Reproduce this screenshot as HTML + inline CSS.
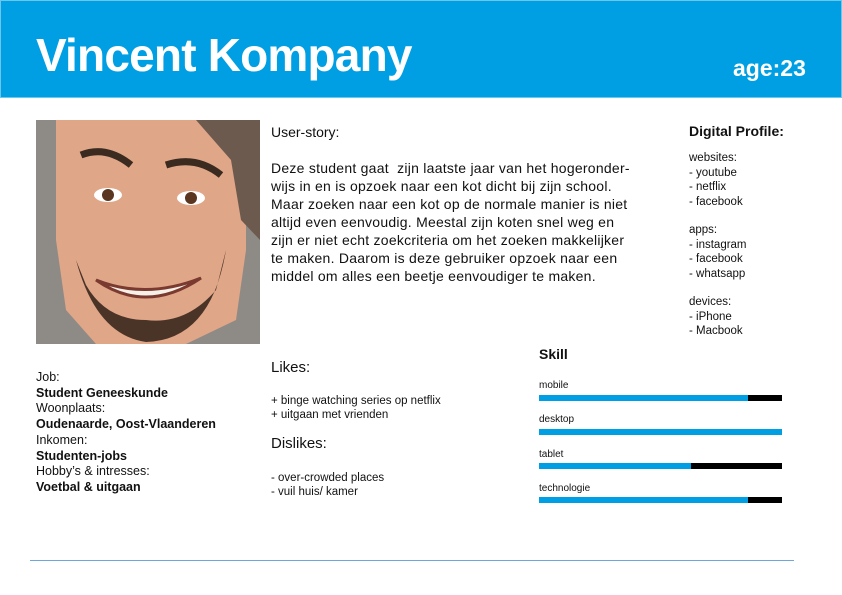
<!DOCTYPE html>
<html><head><meta charset="utf-8"><style>
*{margin:0;padding:0;box-sizing:border-box}
body{width:842px;height:595px;background:#fff;position:relative;overflow:hidden;font-family:"Liberation Sans",sans-serif;color:#111}
.a{position:absolute;white-space:nowrap}
#hdr{position:absolute;left:0;top:0;width:842px;height:98px;background:#009fe3;border:1px solid #6cc7ee}
h1{position:absolute;left:36px;top:28px;font-size:46px;font-weight:bold;color:#fff;letter-spacing:-0.8px}
.age{left:733px;top:55px;font-size:23px;font-weight:bold;color:#fff}
.photo{position:absolute;left:36px;top:120px;width:224px;height:224px;overflow:hidden}
.story{left:271px;top:123px;font-size:14px;line-height:18px}
.p{left:271px;top:159px;font-size:14px;line-height:18px;letter-spacing:0.25px}
.dp{left:689px;top:123px;font-size:14px;font-weight:bold}
.sm{font-size:11.5px;line-height:14.5px}
.info{left:36px;top:370px;font-size:12.5px;line-height:15.7px}
.hd{font-size:15px}
.bar{position:absolute;left:539px;width:243px;height:6px;background:#000}
.bar i{display:block;height:6px;background:#009fe3}
.lbl{font-size:10px}
</style></head><body>
<div id="hdr"></div>
<h1>Vincent Kompany</h1>
<div class="a age">age:23</div>
<div class="photo"><svg width="224" height="224" viewBox="0 0 224 224">
<path d="M0 0H224V224H0Z" fill="#8e8a86"/>
<path d="M20 0H210V130L200 200L150 224H60L30 190L20 120Z" fill="#e0a688"/>
<path d="M160 0H224V120L205 100L195 40Z" fill="#6d5a4e"/>
<path d="M40 140Q60 215 110 222Q175 220 190 130L180 170Q150 205 110 200Q70 200 50 165Z" fill="#4a3428"/>
<path d="M45 35Q70 25 95 45M130 45Q160 35 185 55" stroke="#3b2a20" stroke-width="7" fill="none"/>
<ellipse cx="72" cy="75" rx="14" ry="7" fill="#fff"/><circle cx="72" cy="75" r="6" fill="#5a3520"/>
<ellipse cx="155" cy="78" rx="14" ry="7" fill="#fff"/><circle cx="155" cy="78" r="6" fill="#5a3520"/>
<path d="M60 160Q110 195 165 158Q110 180 60 160Z" fill="#f5f0e8" stroke="#7a3a30" stroke-width="3"/>
</svg></div>
<div class="a story">User-story:</div>
<div class="a p">Deze student gaat&nbsp; zijn laatste jaar van het hogeronder-<br>wijs in en is opzoek naar een kot dicht bij zijn school.<br>Maar zoeken naar een kot op de normale manier is niet<br>altijd even eenvoudig. Meestal zijn koten snel weg en<br>zijn er niet echt zoekcriteria om het zoeken makkelijker<br>te maken. Daarom is deze gebruiker opzoek naar een<br>middel om alles een beetje eenvoudiger te maken.</div>
<div class="a dp">Digital Profile:</div>
<div class="a sm" style="left:689px;top:151px">websites:<br>- youtube<br>- netflix<br>- facebook</div>
<div class="a sm" style="left:689px;top:223px">apps:<br>- instagram<br>- facebook<br>- whatsapp</div>
<div class="a sm" style="left:689px;top:295px">devices:<br>- iPhone<br>- Macbook</div>
<div class="a info">Job:<br><b>Student Geneeskunde</b><br>Woonplaats:<br><b>Oudenaarde, Oost-Vlaanderen</b><br>Inkomen:<br><b>Studenten-jobs</b><br>Hobby’s &amp; intresses:<br><b>Voetbal &amp; uitgaan</b></div>
<div class="a hd" style="left:271px;top:359px">Likes:</div>
<div class="a sm" style="left:271px;top:394px;line-height:14px">+ binge watching series op netflix<br>+ uitgaan met vrienden</div>
<div class="a hd" style="left:271px;top:435px">Dislikes:</div>
<div class="a sm" style="left:271px;top:471px;line-height:14px">- over-crowded places<br>- vuil huis/ kamer</div>
<div class="a" style="left:539px;top:346px;font-size:14px;font-weight:bold">Skill</div>
<div class="a lbl" style="left:539px;top:380px">mobile</div>
<div class="bar" style="top:395px"><i style="width:209px"></i></div>
<div class="a lbl" style="left:539px;top:414px">desktop</div>
<div class="bar" style="top:429px"><i style="width:243px"></i></div>
<div class="a lbl" style="left:539px;top:449px">tablet</div>
<div class="bar" style="top:463px"><i style="width:152px"></i></div>
<div class="a lbl" style="left:539px;top:483px">technologie</div>
<div class="bar" style="top:497px"><i style="width:209px"></i></div>
<div style="position:absolute;left:30px;top:560px;width:764px;height:1px;background:#6fa8d8"></div>
</body></html>
